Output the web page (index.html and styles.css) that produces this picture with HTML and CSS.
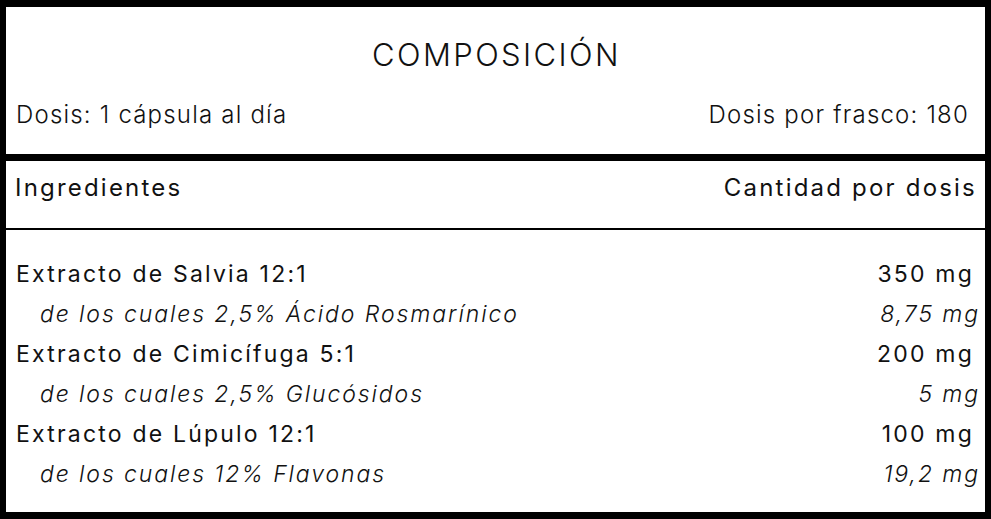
FILE: index.html
```html
<!DOCTYPE html>
<html lang="es">
<head>
<meta charset="utf-8">
<title>Composición</title>
<link rel="stylesheet" href="styles.css">
</head>
<body>
<div class="card">
  <div class="head">
    <h1 class="title">COMPOSICIÓN</h1>
    <div class="dosis">
      <span>Dosis: 1 cápsula al día</span>
      <span>Dosis por frasco: 180</span>
    </div>
  </div>
  <div class="thead">
    <span>Ingredientes</span>
    <span>Cantidad por dosis</span>
  </div>
  <div class="rows">
    <div class="row"><span>Extracto de Salvia 12:1</span><span>350 mg</span></div>
    <div class="row sub"><span>de los cuales 2,5% Ácido Rosmarínico</span><span>8,75 mg</span></div>
    <div class="row"><span>Extracto de Cimicífuga 5:1</span><span>200 mg</span></div>
    <div class="row sub"><span>de los cuales 2,5% Glucósidos</span><span>5 mg</span></div>
    <div class="row"><span>Extracto de Lúpulo 12:1</span><span>100 mg</span></div>
    <div class="row sub"><span>de los cuales 12% Flavonas</span><span>19,2 mg</span></div>
  </div>
</div>
</body>
</html>
```
FILE: styles.css
```css
html, body {
  margin: 0;
  padding: 0;
  background: #fff;
}
body {
  font-family: Inter, "Noto Sans", sans-serif;
  color: #111;
}
.card {
  box-sizing: border-box;
  width: 991px;
  height: 519px;
  border-style: solid;
  border-color: #000;
  border-width: 7px 6px 7px 6px;
  display: flex;
  flex-direction: column;
}
.head {
  height: 147px;
  box-sizing: border-box;
  padding: 0 16px 0 10px;
  display: flex;
  flex-direction: column;
}
.title {
  margin: 0;
  padding: 28px 0 0 8px;
  text-align: center;
  font-weight: 300;
  font-size: 31px;
  line-height: 40px;
  letter-spacing: 2.4px;
}
.dosis {
  margin-top: 25px;
  display: flex;
  justify-content: space-between;
  font-weight: 300;
  font-size: 24px;
  line-height: 30px;
  letter-spacing: 1.2px;
}
.thead {
  border-top: 7px solid #000;
  border-bottom: 2px solid #000;
  height: 67px;
  padding: 0 8px 0 9px;
  display: flex;
  justify-content: space-between;
  align-items: flex-start;
  font-size: 24px;
  line-height: 30px;
  letter-spacing: 2.2px;
}
.thead span {
  margin-top: 12px;
}
.rows {
  padding: 24px 11px 0 10px;
}
.row {
  display: flex;
  justify-content: space-between;
  font-size: 23px;
  line-height: 40px;
  letter-spacing: 2.2px;
}
.sub {
  font-style: italic;
  font-weight: 300;
  letter-spacing: 1.9px;
  padding-left: 24px;
  margin-right: -6px;
}
```
